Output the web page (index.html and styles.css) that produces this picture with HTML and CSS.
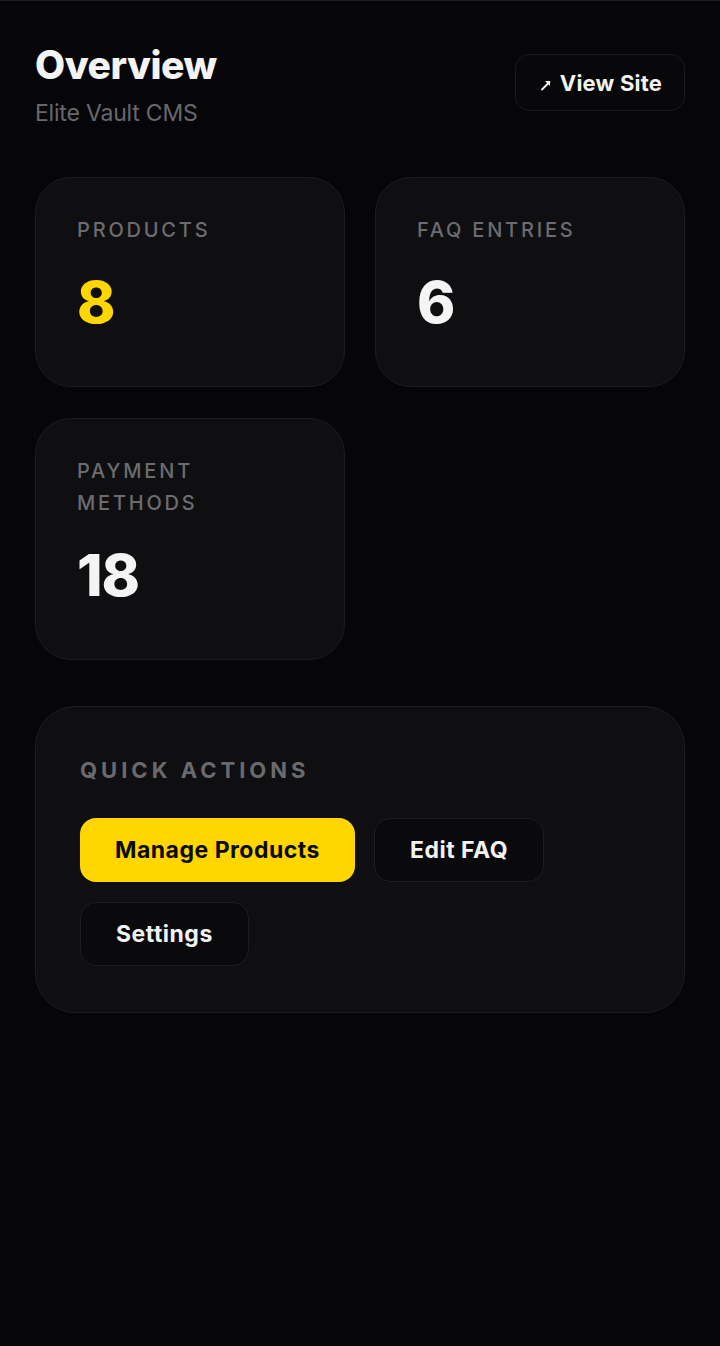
FILE: index.html
```html
<!DOCTYPE html>
<html lang="en">
<head>
<meta charset="utf-8">
<title>Overview</title>
<link rel="stylesheet" href="styles.css">
</head>
<body>
<main class="page">
  <header class="header">
    <div class="titles">
      <h1 class="title">Overview</h1>
      <p class="subtitle">Elite Vault CMS</p>
    </div>
    <a class="view-site" href="#"><svg class="arrow" width="12" height="12" viewBox="0 0 12 12" aria-hidden="true"><path d="M2 10.5 L9.5 3" stroke="#f2f2f2" stroke-width="1.8" stroke-linecap="round"/><path d="M5 2 H10 V7 Z" fill="#f2f2f2"/></svg>View Site</a>
  </header>

  <section class="stats">
    <div class="stat-card">
      <div class="stat-label">PRODUCTS</div>
      <div class="stat-value accent">8</div>
    </div>
    <div class="stat-card">
      <div class="stat-label">FAQ ENTRIES</div>
      <div class="stat-value">6</div>
    </div>
    <div class="stat-card">
      <div class="stat-label">PAYMENT<br>METHODS</div>
      <div class="stat-value">18</div>
    </div>
  </section>

  <section class="actions">
    <h2 class="actions-title">QUICK ACTIONS</h2>
    <div class="action-buttons">
      <a class="btn btn-primary" href="#">Manage Products</a>
      <a class="btn btn-ghost" href="#">Edit FAQ</a>
      <a class="btn btn-ghost" href="#">Settings</a>
    </div>
  </section>
</main>
</body>
</html>
```

FILE: styles.css
```css
* { box-sizing: border-box; }

html, body {
  margin: 0;
  padding: 0;
  background: #060608;
  min-height: 100%;
}

body {
  font-family: Inter, "Open Sans", sans-serif;
  color: #f2f2f2;
  border-top: 1px solid #1c1c20;
  min-height: 1346px;
}

.page {
  padding: 42px 35px 40px;
}

.header {
  display: flex;
  justify-content: space-between;
  align-items: flex-start;
}

.title {
  margin: 0;
  font-size: 39px;
  font-weight: 800;
  letter-spacing: -0.5px;
  line-height: 44px;
  color: #f4f4f4;
}

.subtitle {
  margin: 12px 0 0;
  font-size: 23px;
  line-height: 28px;
  color: #68686c;
  letter-spacing: -0.2px;
}

.view-site {
  margin-top: 11px;
  display: flex;
  align-items: center;
  gap: 8px;
  height: 57px;
  padding: 0 22px 0 24px;
  border: 1px solid #1a1a1e;
  border-radius: 14px;
  background: #08080a;
  color: #f2f2f2;
  text-decoration: none;
  font-size: 22px;
  font-weight: 700;
  letter-spacing: 0.2px;
}

.arrow {
  margin-top: 5px;
  flex: none;
}

.stats {
  margin-top: 50px;
  display: grid;
  grid-template-columns: 1fr 1fr;
  gap: 31px 30px;
}

.stat-card {
  background: #0f0f11;
  border: 1px solid #1d1d21;
  border-radius: 36px;
  padding: 36px 41px 54px;
  min-height: 210px;
}

.stat-label {
  font-size: 20px;
  line-height: 32px;
  letter-spacing: 2.8px;
  color: #6c6c70;
  font-weight: 500;
}

.stat-value {
  margin-top: 26px;
  font-size: 58px;
  line-height: 60px;
  font-weight: 800;
  color: #f4f4f4;
  letter-spacing: -1px;
}

.stat-value.accent {
  color: #ffd600;
}

.actions {
  margin-top: 46px;
  background: #0f0f11;
  border: 1px solid #1d1d21;
  border-radius: 40px;
  padding: 48px 44px 46px;
}

.actions-title {
  margin: 0;
  font-size: 22px;
  line-height: 30px;
  font-weight: 700;
  letter-spacing: 4px;
  color: #6a6a6e;
}

.action-buttons {
  margin-top: 33px;
  display: flex;
  flex-wrap: wrap;
  gap: 20px 19px;
  max-width: 500px;
}

.btn {
  display: flex;
  align-items: center;
  justify-content: center;
  height: 64px;
  padding: 0 35px;
  border-radius: 16px;
  font-size: 23px;
  font-weight: 700;
  text-decoration: none;
  letter-spacing: 0.5px;
}

.btn-primary {
  background: #ffd600;
  color: #0a0a0a;
}

.btn-ghost {
  background: #0a0a0c;
  border: 1px solid #1e1e22;
  color: #f2f2f2;
}
```
